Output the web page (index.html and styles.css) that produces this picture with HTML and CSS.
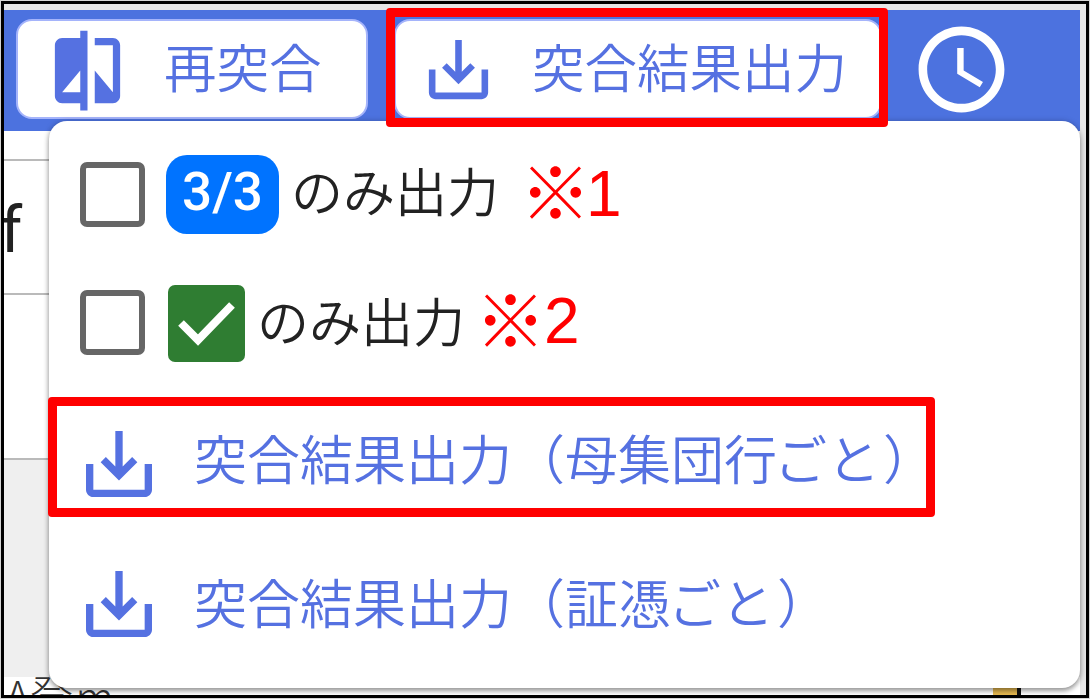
FILE: index.html
```html
<!DOCTYPE html>
<html lang="ja">
<head>
    <meta charset="UTF-8">
    <meta name="viewport" content="width=device-width, initial-scale=1.0">
    <title>突合結果出力</title>
    <link rel="stylesheet" href="styles.css">
</head>
<body>
    <div class="frame">
        <header class="toolbar">
            <button class="btn btn-compare">
                <svg class="icon-compare" viewBox="0 0 24 24"><path d="M10 3H5c-1.1 0-2 .9-2 2v14c0 1.1.9 2 2 2h5v2h2V1h-2v2zm0 15H5l5-6v6zm9-15h-5v2h5v13l-5-6v9h5c1.1 0 2-.9 2-2V5c0-1.1-.9-2-2-2z"/></svg>
                <span>再突合</span>
            </button>
            <button class="btn btn-export">
                <svg class="icon-save" viewBox="0 0 24 24"><path d="M19 12v7H5v-7H3v7c0 1.1.9 2 2 2h14c1.1 0 2-.9 2-2v-7h-2zm-6 .67l2.59-2.58L17 11.5l-5 5-5-5 1.41-1.41L11 12.67V3h2z"/></svg>
                <span>突合結果出力</span>
            </button>
            <svg class="icon-clock" viewBox="0 0 24 24"><path d="M11.99 2C6.47 2 2 6.48 2 12s4.47 10 9.99 10C17.52 22 22 17.52 22 12S17.52 2 11.99 2zM12 20c-4.42 0-8-3.58-8-8s3.58-8 8-8 8 3.58 8 8-3.58 8-8 8zm.5-13H11v6l5.25 3.15.75-1.23-4.5-2.67z"/></svg>
        </header>

        <!-- メニューの後ろの表 -->
        <main class="sheet">
            <div class="cell cell-head"></div>
            <div class="cell cell-name">f</div>
            <div class="cell cell-blank"></div>
            <div class="cell cell-gray"></div>
            <div class="cell cell-foot"><span>A登㎡</span><i class="marker"></i></div>
        </main>

        <!-- 出力メニュー -->
        <div class="menu">
            <label class="option">
                <span class="checkbox"></span>
                <span class="badge">3/3</span>
                <span class="option-text">のみ出力</span>
                <span class="note note-first"><b>※</b>1</span>
            </label>
            <label class="option option-check">
                <span class="checkbox"></span>
                <svg class="check" viewBox="0 0 77 77"><rect width="77" height="77" rx="7"/><path d="M13 38 30 55 64 20"/></svg>
                <span class="option-text">のみ出力</span>
                <span class="note"><b>※</b>2</span>
            </label>
            <a class="item item-rows">
                <svg class="icon-item" viewBox="0 0 24 24"><path d="M19 12v7H5v-7H3v7c0 1.1.9 2 2 2h14c1.1 0 2-.9 2-2v-7h-2zm-6 .67l2.59-2.58L17 11.5l-5 5-5-5 1.41-1.41L11 12.67V3h2z"/></svg>
                <span>突合結果出力（母集団行<i>ごと</i>）</span>
            </a>
            <a class="item">
                <svg class="icon-item" viewBox="0 0 24 24"><path d="M19 12v7H5v-7H3v7c0 1.1.9 2 2 2h14c1.1 0 2-.9 2-2v-7h-2zm-6 .67l2.59-2.58L17 11.5l-5 5-5-5 1.41-1.41L11 12.67V3h2z"/></svg>
                <span>突合結果出力（証憑<i>ごと</i>）</span>
            </a>
        </div>

        <!-- 赤枠 -->
        <div class="mark mark-button"></div>
        <div class="mark mark-item"></div>
    </div>
</body>
</html>
```
FILE: styles.css
```css
:root {
    --blue: #4c72df;
    --text-blue: #5571e1;
    --red: #ff0000;
}

* { margin: 0; padding: 0; box-sizing: border-box; }

body {
    height: 699px;
    padding: 1px;
    overflow: hidden;
    background: #d5d5d5;
    font-family: 'Liberation Sans', 'Noto Sans CJK JP', sans-serif;
}

.frame {
    position: relative;
    width: 1088px;
    height: 697px;
    padding: 6px 6px 0 0;
    border: 3px solid #000;
    background: #e6e6e6;
    overflow: hidden;
}

/* ツールバー */
.toolbar {
    display: flex;
    align-items: flex-start;
    height: 121px;
    padding: 9px 0 0 12px;
    background: var(--blue);
}

.btn {
    display: flex;
    align-items: center;
    height: 100px;
    border: 2px solid #a5b4fb;
    border-radius: 16px;
    background: #fff;
    color: var(--text-blue);
    font: 350 52.5px/60px 'Noto Sans CJK JP', sans-serif;
    white-space: nowrap;
}

.btn span { margin-top: -8px; }
.btn svg { flex: none; fill: var(--text-blue); }

.btn-compare { width: 352px; padding-left: 26px; margin-right: 26px; }
.icon-compare { width: 87px; height: 87px; margin-right: 33px; margin-top: 2px; }

.btn-export { width: 488px; padding-left: 23px; }
.icon-save { width: 79px; height: 79px; margin-right: 34px; }

.icon-clock { flex: none; width: 103px; height: 103px; margin: -1px 0 0 28px; fill: #fff; }

/* 表 */
.sheet { height: 564px; background: #fff; }
.cell { border-bottom: 2px solid #bababa; overflow: hidden; }
.cell-head { height: 30px; }
.cell-name { height: 134px; padding: 32px 0 0 1px; margin-left: -5px; font: 64px/76px Roboto, sans-serif; color: #222; }
.cell-blank { height: 165px; }
.cell-gray { height: 217px; border: 0; background: #efefef; }
.cell-foot {
    display: flex;
    height: 18px;
    border: 0;
    padding-left: 1px;
    color: #333;
    font: 300 43px/50px 'Noto Sans CJK JP', sans-serif;
}
.cell-foot span { width: 988px; margin-top: -9px; }
.marker { width: 28px; height: 18px; background: #e6b950; border-right: 4px solid #111; }

/* メニュー */
.menu {
    position: absolute;
    left: 45px;
    top: 117px;
    width: 1031px;
    height: 567px;
    padding-top: 34px;
    border-radius: 18px;
    background: #fff;
    box-shadow: 0 3px 5px rgba(0, 0, 0, 0.35), 0 0 6px rgba(0, 0, 0, 0.18);
}

.option { display: flex; align-items: center; height: 79px; padding-left: 31px; white-space: nowrap; }
.option-check { margin-top: 49px; height: 80px; }

.checkbox { width: 65px; height: 65px; border: 6px solid #666; border-radius: 7px; }
.option-check .checkbox { margin-top: -2px; }

.badge {
    width: 113px;
    height: 79px;
    margin-left: 21px;
    border-radius: 21px;
    background: #0073ff;
    color: #fff;
    font: 500 53px/75px Roboto, sans-serif;
    text-align: center;
}

.check { width: 77px; height: 77px; margin-left: 23px; }
.check rect { fill: #2f7d32; }
.check path { fill: none; stroke: #fff; stroke-width: 8; }

.option-text { margin: -10px 0 0 12px; color: #222; font: 350 52px/60px 'Noto Sans CJK JP', sans-serif; }
.option-check .option-text { margin-top: -6px; }

.note { display: flex; align-items: center; margin: -4px 0 0 10px; color: var(--red); font-size: 64px; line-height: 72px; }
.note b { margin: -11px -2px 0 0; font: 400 71px/72px 'Noto Sans CJK JP', sans-serif; }
.note-first { margin: -2px 0 0 21px; }
.note-first b { margin-right: -5px; }

.item {
    display: flex;
    align-items: center;
    height: 88px;
    padding-left: 26px;
    color: var(--text-blue);
    font: 350 53px/60px 'Noto Sans CJK JP', sans-serif;
    white-space: nowrap;
}
.item i { margin: 0 3px 0 -3px; font-style: normal; }
.item + .item { margin-top: 52px; }
.item-rows { margin-top: 57px; }
.icon-item { flex: none; width: 88px; height: 88px; margin-right: 31px; fill: var(--text-blue); }
.item span { margin-top: -6px; }
.item-rows span { margin-top: -14px; }

/* 赤枠 */
.mark { position: absolute; border: 9px solid var(--red); border-radius: 4px; }
.mark-button { left: 382px; top: 4px; width: 502px; height: 119px; }
.mark-item { left: 44px; top: 393px; width: 887px; height: 120px; }
```
